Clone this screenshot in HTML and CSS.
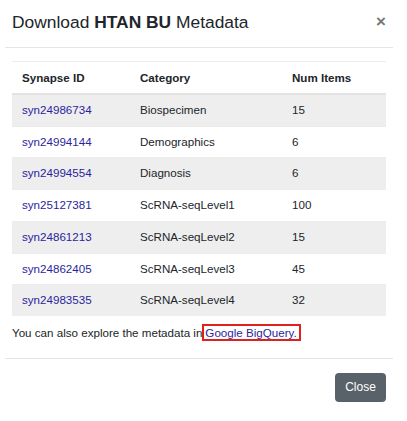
FILE: index.html
```html
<!DOCTYPE html>
<html>
<head>
<meta charset="utf-8">
<link rel="stylesheet" href="styles.css">
</head>
<body>
<div class="modal">
  <div class="modal-header">
    <h4 class="modal-title">Download <strong>HTAN BU</strong> Metadata</h4>
    <button class="close-x" type="button">×</button>
  </div>
  <div class="modal-body">
    <table class="meta-table">
      <thead>
        <tr><th class="c1">Synapse ID</th><th class="c2">Category</th><th class="c3">Num Items</th></tr>
      </thead>
      <tbody>
        <tr class="odd"><td><a href="#">syn24986734</a></td><td>Biospecimen</td><td>15</td></tr>
        <tr><td><a href="#">syn24994144</a></td><td>Demographics</td><td>6</td></tr>
        <tr class="odd"><td><a href="#">syn24994554</a></td><td>Diagnosis</td><td>6</td></tr>
        <tr><td><a href="#">syn25127381</a></td><td>ScRNA-seqLevel1</td><td>100</td></tr>
        <tr class="odd"><td><a href="#">syn24861213</a></td><td>ScRNA-seqLevel2</td><td>15</td></tr>
        <tr><td><a href="#">syn24862405</a></td><td>ScRNA-seqLevel3</td><td>45</td></tr>
        <tr class="odd"><td><a href="#">syn24983535</a></td><td>ScRNA-seqLevel4</td><td>32</td></tr>
      </tbody>
    </table>
    <p class="note">You can also explore the metadata in<a class="bq" href="#">Google BigQuery.</a></p>
  </div>
  <div class="modal-footer">
    <button class="btn-close" type="button">Close</button>
  </div>
</div>
</body>
</html>
```

FILE: styles.css
```css
* { box-sizing: border-box; }
html, body { margin: 0; padding: 0; background: #fff; }
body {
  font-family: "Liberation Sans", Arial, sans-serif;
  color: #212529;
  font-size: 11.6px;
}
.modal {
  width: 388px;
  margin-left: 5px;
}
.modal-header {
  height: 48px;
  display: flex;
  align-items: flex-start;
  justify-content: space-between;
  padding: 11px 7px 0 7px;
  border-bottom: 1px solid #e5e5e5;
}
.modal-title {
  margin: 0;
  font-size: 17.4px;
  font-weight: normal;
  line-height: 22px;
  color: #212529;
}
.modal-title strong { font-weight: bold; }
.close-x {
  border: 0;
  background: none;
  padding: 0;
  margin: 1px 0 0 0;
  font-family: "Liberation Sans", Arial, sans-serif;
  font-size: 17px;
  font-weight: bold;
  line-height: 20px;
  color: #777;
}
.modal-body {
  padding: 13px 7px 0 7px;
}
.meta-table {
  width: 374px;
  border-collapse: collapse;
  table-layout: fixed;
}
.meta-table th, .meta-table td {
  text-align: left;
  padding: 8px 10px;
  line-height: 14.7px;
  border-top: 1px solid #ececec;
  font-size: 11.6px;
}
.meta-table th {
  font-weight: bold;
  line-height: 15px;
  border-bottom: 2px solid #e3e3e3;
}
.c1 { width: 118px; }
.c2 { width: 152px; }
.c3 { width: 104px; }
.meta-table tr.odd td { background: #eeeeee; }
.meta-table a { color: #2a1f9e; text-decoration: none; }
.note {
  margin: 9px 0 0 0;
  line-height: 15px;
  padding-bottom: 18px;
}
.bq {
  color: #2a1f9e;
  text-decoration: none;
  border: 2px solid #e0201a;
  padding: 0 2px 0 1px;
}
.modal-footer {
  border-top: 1px solid #e5e5e5;
  display: flex;
  justify-content: flex-end;
  padding: 14px 7px;
}
.btn-close {
  width: 51px;
  height: 29px;
  border: 0;
  border-radius: 4px;
  background: #5a6269;
  color: #fff;
  font-family: "Liberation Sans", Arial, sans-serif;
  font-size: 12px;
  padding: 0;
}
```
